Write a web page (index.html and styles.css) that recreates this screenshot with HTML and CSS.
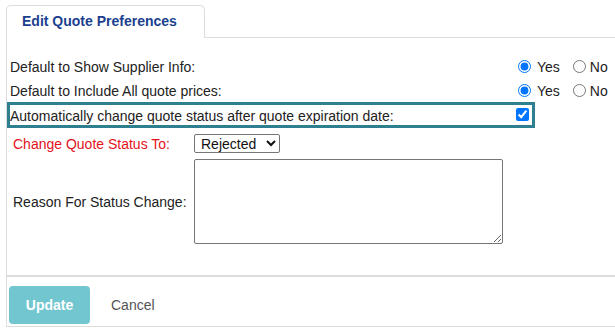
FILE: index.html
```html
<!DOCTYPE html>
<html lang="en">

<head>
    <meta charset="UTF-8">
    <meta name="viewport" content="width=device-width, initial-scale=1.0">
    <title>Edit Quote Preferences</title>
    <link rel="stylesheet" href="styles.css">
</head>

<body>
    <div class="prefs">
        <div class="tabs">
            <div class="tab">Edit Quote Preferences</div>
        </div>
        <div class="panel">
            <div class="options">
                <div class="opt-row">
                    <span class="opt-label">Default to Show Supplier Info:</span>
                    <span class="opt-value">
                        <input type="radio" name="supplier" id="supYes" checked><label for="supYes" class="yes">Yes</label>
                        <input type="radio" name="supplier" id="supNo"><label for="supNo">No</label>
                    </span>
                </div>
                <div class="opt-row second">
                    <span class="opt-label">Default to Include All quote prices:</span>
                    <span class="opt-value">
                        <input type="radio" name="prices" id="priYes" checked><label for="priYes" class="yes">Yes</label>
                        <input type="radio" name="prices" id="priNo"><label for="priNo">No</label>
                    </span>
                </div>
                <div class="opt-row focus">
                    <span class="opt-label">Automatically change quote status after quote expiration date:</span>
                    <input type="checkbox" id="autoStatus" checked>
                </div>
            </div>

            <div class="status">
                <label class="status-label required" for="newStatus">Change Quote Status To:</label>
                <div>
                    <select id="newStatus">
                        <option>Rejected</option>
                        <option>Expired</option>
                        <option>Accepted</option>
                    </select>
                </div>
                <label class="status-label" for="reason">Reason For Status Change:</label>
                <div>
                    <textarea id="reason"></textarea>
                </div>
            </div>

            <div class="actions">
                <button class="btn-update" disabled>Update</button>
                <button class="btn-cancel">Cancel</button>
            </div>
        </div>
    </div>
</body>

</html>
```

FILE: styles.css
```css
html,
body {
    margin: 0;
    padding: 0;
    background: #fff;
    font-family: "Liberation Sans", Arial, sans-serif;
    font-size: 14px;
    color: #222;
}

.prefs {
    margin-left: 6px;
    width: calc(100% - 6px);
}

.tabs {
    display: flex;
    padding-top: 5px;
    border-bottom: 1px solid #ddd;
}

.tab {
    box-sizing: border-box;
    width: 199px;
    height: 33px;
    margin-bottom: -1px;
    padding: 7px 15px 0;
    background: #fff;
    border: 1px solid #ddd;
    border-bottom: none;
    border-radius: 5px 5px 0 0;
    color: #1b3f8f;
    font-weight: bold;
    line-height: 16px;
}

.panel {
    border-left: 1px solid #ddd;
    border-bottom: 1px solid #ddd;
}

/* checkboxes and radios */
.options {
    padding-top: 16px;
}

.opt-row {
    display: flex;
    align-items: center;
    height: 25px;
    padding-left: 3px;
    line-height: 16px;
}

.opt-row.second {
    height: 23px;
}

.opt-label {
    width: 506px;
}

.opt-value {
    display: flex;
    align-items: center;
}

.opt-value input {
    width: 13px;
    height: 13px;
    margin: 0 4px 0 2px;
}

.opt-value label.yes {
    margin-left: 2px;
    margin-right: 11px;
}

.opt-row.focus {
    box-sizing: border-box;
    width: 528px;
    height: 26px;
    padding-left: 0;
    padding-bottom: 1px;
    align-items: flex-end;
    border: 3px solid #2e8091;
}

.opt-row.focus input {
    align-self: center;
    width: 13px;
    height: 13px;
    margin: 0 3px 0 0;
}

/* status change */
.status {
    display: grid;
    grid-template-columns: 181px auto;
    row-gap: 6px;
    align-items: center;
    justify-items: start;
    padding: 6px 0 0 6px;
}

.status-label.required {
    color: #e3121b;
}

.status select {
    display: block;
    width: 86px;
    height: 19px;
    font-family: "Liberation Sans", Arial, sans-serif;
    font-size: 14px;
    color: #111;
    border: 1px solid #767676;
    border-radius: 2px;
    background: #fff;
    padding: 0 0 0 2px;
}

.status textarea {
    display: block;
    box-sizing: border-box;
    width: 309px;
    height: 85px;
    margin: 0;
    border: 1px solid #767676;
    border-radius: 2px;
    font-family: "Liberation Sans", Arial, sans-serif;
    font-size: 14px;
}

.actions {
    display: flex;
    align-items: center;
    margin-top: 31px;
    padding: 9px 0 2px 2px;
    border-top: 2px solid #ddd;
}

.actions button {
    font-family: "Liberation Sans", Arial, sans-serif;
    font-size: 14px;
    border: none;
    cursor: pointer;
}

.btn-update {
    width: 81px;
    height: 38px;
    background: #72c6d0;
    color: #fff;
    font-weight: bold;
    border-radius: 4px;
}

.btn-cancel {
    margin-left: 21px;
    padding: 0;
    background: none;
    color: #555;
}
```
